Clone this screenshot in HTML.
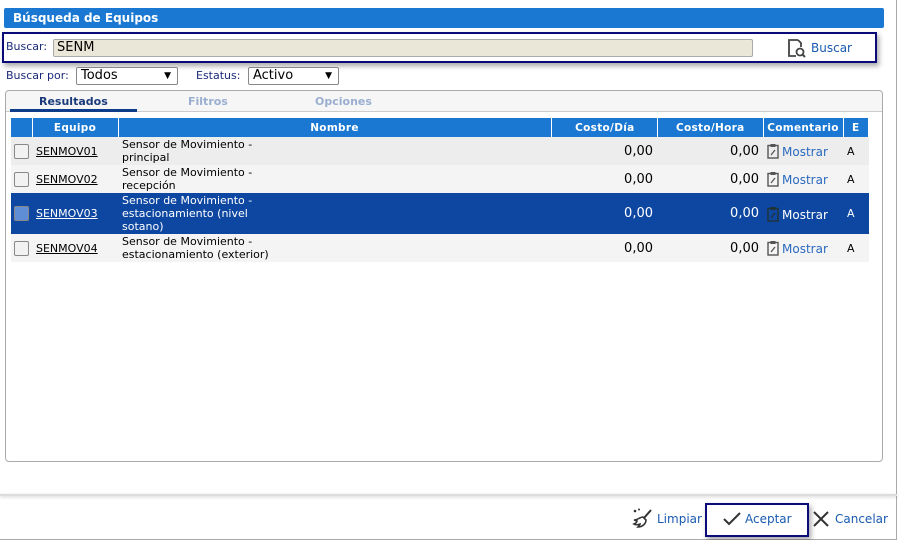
<!DOCTYPE html>
<html><head><meta charset="utf-8"><style>
*{box-sizing:border-box;margin:0;padding:0}
body{width:900px;height:540px;background:#fff;font-family:Verdana,"DejaVu Sans","Liberation Sans",sans-serif;font-size:12px;position:relative;overflow:hidden}
.abs{position:absolute}
.title{left:4px;top:8px;width:880px;height:20px;background:#1a78d2;border-radius:2px;color:#fff;font-weight:bold;font-size:12px;padding:2px 9px;line-height:16px}
.hl{border:2px solid #0a0a78;box-shadow:2px 3px 5px rgba(0,0,0,.35)}
.sel{background:#fff;border:1px solid #888;border-radius:2px;height:18px;font-size:13px;padding:0 4px;line-height:16px;color:#000}
.sel span{position:absolute;right:6px;top:0;font-size:9px}
table{border-collapse:collapse;position:absolute;left:11px;top:118px;width:858px;font-size:11px}
th{background:#1a78d2;color:#fff;font-weight:bold;height:19px;border-right:1px solid #fff;font-size:10.5px;letter-spacing:.3px}
td{padding:0 4px;vertical-align:middle;line-height:13px}
tr.r1 td{background:#ededed;height:28px}
tr.r2 td{background:#f4f4f4;height:28px}
tr.s td{background:#0d47a1;color:#fff;height:41px}
.cb{width:15px;height:15px;border:1px solid #888;border-radius:2px;background:#f2f2f2}
.num{text-align:right;font-size:13px;padding-right:4px}
a{color:#000;text-decoration:underline;font-size:11px}
.most{color:#2a6abf;font-size:12px;white-space:nowrap}
.most svg{vertical-align:-3px;margin-right:3px}
.s .most{color:#fff}
.s a{color:#fff}
</style></head><body>
<div class="abs title">Búsqueda de Equipos</div>
<div class="abs hl" style="left:2px;top:32px;width:875px;height:31px"></div>
<div class="abs" style="left:6px;top:40px;color:#1a2a7a;font-size:11px">Buscar:</div>
<div class="abs" style="left:53px;top:39px;width:700px;height:18px;background:#ebe7d8;border:1px solid #aaa;border-radius:2px;font-size:13px;padding-left:3px;line-height:16px">SENM</div>
<svg class="abs" style="left:787px;top:38px" width="20" height="20" viewBox="0 0 20 20"><path d="M11 2H2v16h7M11 2l3 3v4" fill="none" stroke="#444" stroke-width="1.8"/><circle cx="13" cy="14" r="3.5" fill="none" stroke="#444" stroke-width="1.8"/><path d="M15.5 16.5l2.5 2.5" stroke="#444" stroke-width="2"/></svg>
<div class="abs" style="left:811px;top:41px;color:#1a5ab0;font-size:12px">Buscar</div>
<div class="abs" style="left:6px;top:69px;color:#1a2a7a;font-size:11px">Buscar por:</div>
<div class="abs sel" style="left:76px;top:67px;width:102px">Todos<span>▼</span></div>
<div class="abs" style="left:196px;top:69px;color:#1a2a7a;font-size:11px">Estatus:</div>
<div class="abs sel" style="left:248px;top:67px;width:91px">Activo<span>▼</span></div>
<div class="abs" style="left:5px;top:90px;width:878px;height:372px;border:1px solid #aaa;border-radius:4px"></div>
<div class="abs" style="left:6px;top:91px;width:876px;height:21px;background:#f6f6f6;border-bottom:1px solid #ccc;border-radius:4px 4px 0 0"></div>
<div class="abs" style="left:39px;top:95px;font-weight:bold;color:#1a3a7a;font-size:11px">Resultados</div>
<div class="abs" style="left:10px;top:109px;width:127px;height:3px;background:#0d3c8a"></div>
<div class="abs" style="left:188px;top:95px;font-weight:bold;color:#9aaed0;font-size:11px">Filtros</div>
<div class="abs" style="left:315px;top:95px;font-weight:bold;color:#9aaed0;font-size:11px">Opciones</div>
<svg width="0" height="0" style="position:absolute"><defs><symbol id="clip" viewBox="0 0 12 16"><rect x="1" y="2.5" width="10" height="12.5" fill="none" stroke="currentColor" stroke-width="1.4"/><rect x="3.5" y="1" width="5" height="3" fill="currentColor"/><path d="M4 12l4-5" stroke="currentColor" stroke-width="1.3"/></symbol></defs></svg>
<table>
<tr><th style="width:21px"></th><th style="width:86px">Equipo</th><th style="width:433px">Nombre</th><th style="width:106px;text-align:right;padding-right:22px">Costo/Día</th><th style="width:106px;text-align:right;padding-right:18px">Costo/Hora</th><th style="width:80px">Comentario</th><th>E</th></tr>
<tr class="r1"><td style="padding:0 3px"><div class="cb"></div></td><td><a>SENMOV01</a></td><td>Sensor de Movimiento -<br>principal</td><td class="num">0,00</td><td class="num">0,00</td><td><span class="most"><svg width="12" height="16" style="color:#555"><use href="#clip"/></svg>Mostrar</span></td><td>A</td></tr>
<tr class="r2"><td style="padding:0 3px"><div class="cb"></div></td><td><a>SENMOV02</a></td><td>Sensor de Movimiento -<br>recepción</td><td class="num">0,00</td><td class="num">0,00</td><td><span class="most"><svg width="12" height="16" style="color:#555"><use href="#clip"/></svg>Mostrar</span></td><td>A</td></tr>
<tr class="s"><td style="padding:0 3px"><div class="cb" style="background:#5f8ed6"></div></td><td><a>SENMOV03</a></td><td>Sensor de Movimiento -<br>estacionamiento (nivel<br>sotano)</td><td class="num">0,00</td><td class="num">0,00</td><td><span class="most"><svg width="12" height="16" style="color:#233"><use href="#clip"/></svg>Mostrar</span></td><td>A</td></tr>
<tr class="r2"><td style="padding:0 3px"><div class="cb"></div></td><td><a>SENMOV04</a></td><td>Sensor de Movimiento -<br>estacionamiento (exterior)</td><td class="num">0,00</td><td class="num">0,00</td><td><span class="most"><svg width="12" height="16" style="color:#555"><use href="#clip"/></svg>Mostrar</span></td><td>A</td></tr>
</table>
<div class="abs" style="left:896px;top:0;width:1px;height:540px;background:#aaa"></div>
<div class="abs" style="left:0;top:494px;width:897px;height:2px;background:#ddd;box-shadow:0 1px 3px rgba(0,0,0,.2)"></div>
<div class="abs" style="left:0;top:539px;width:897px;height:1px;background:#aaa"></div>
<svg class="abs" style="left:632px;top:508px" width="22" height="20" viewBox="0 0 22 20"><circle cx="3" cy="3" r="1.3" fill="#333"/><circle cx="7" cy="1.5" r="1" fill="#333"/><path d="M19 2l-7 8" stroke="#333" stroke-width="2"/><path d="M2 12c4 0 6-3 9-3l3 3c0 4-4 7-8 7c1-1 2-2 2-3c-2 1-4 1-6 0c2-1 3-2 3-3z" fill="none" stroke="#333" stroke-width="1.6"/></svg>
<div class="abs" style="left:657px;top:512px;color:#1a5ab0;font-size:12px">Limpiar</div>
<div class="abs hl" style="left:705px;top:503px;width:104px;height:34px"></div>
<svg class="abs" style="left:722px;top:512px" width="20" height="14"><path d="M2 7l5 5L18 1" fill="none" stroke="#333" stroke-width="2"/></svg>
<div class="abs" style="left:745px;top:512px;color:#1a5ab0;font-size:12px">Aceptar</div>
<svg class="abs" style="left:812px;top:510px" width="18" height="18"><path d="M2 2l14 14M16 2L2 16" stroke="#333" stroke-width="2"/></svg>
<div class="abs" style="left:835px;top:512px;color:#1a5ab0;font-size:12px">Cancelar</div>
</body></html>
